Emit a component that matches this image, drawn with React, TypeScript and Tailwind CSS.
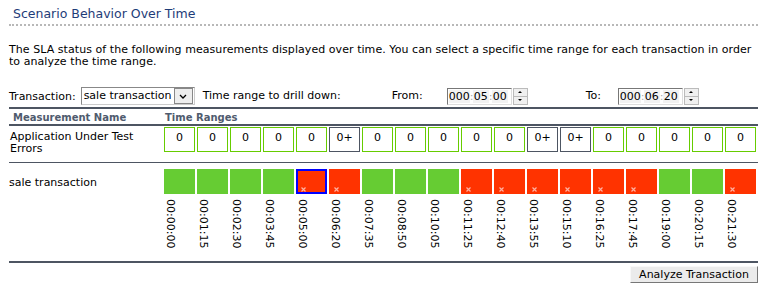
import React from "react";

const errs = [0, 0, 0, 0, 0, 1, 0, 0, 0, 0, 0, 1, 1, 0, 0, 0, 0, 0];
const red = new Set([4, 5, 9, 10, 11, 12, 13, 14, 17]);
const labels = [
  "00:00:00", "00:01:15", "00:02:30", "00:03:45", "00:05:00", "00:06:20",
  "00:07:35", "00:08:50", "00:10:05", "00:11:25", "00:12:40", "00:13:55",
  "00:15:10", "00:16:25", "00:17:45", "00:19:00", "00:20:15", "00:21:30",
];

function Spinner({ a, b, c }: { a: string; b: string; c: string }) {
  return (
    <div className="flex items-stretch h-[17px]">
      <div className="flex items-center bg-white border border-t-[#777] border-l-[#777] border-r-[#ddd] border-b-[#ddd] pl-[1px] pr-[3px] leading-[13px]">
        <span className="bg-[#f2f2f2]">{a}</span>
        <span className="text-[#aaa] w-[3px] text-center">:</span>
        <span className="bg-[#f2f2f2] px-[1px]">{b}</span>
        <span className="text-[#aaa] w-[3px] text-center">:</span>
        <span className="bg-[#f2f2f2] px-[1px]">{c}</span>
      </div>
      <div className="flex flex-col w-[15px] ml-[1px]">
        <div className="flex-1 bg-[#f0f0f0] border border-[#bbb] flex items-center justify-center">
          <div className="w-0 h-0 border-x-[2px] border-x-transparent border-b-[2px] border-b-black" />
        </div>
        <div className="flex-1 bg-[#f0f0f0] border border-t-0 border-[#bbb] flex items-center justify-center">
          <div className="w-0 h-0 border-x-[2px] border-x-transparent border-t-[2px] border-t-black" />
        </div>
      </div>
    </div>
  );
}

export default function App() {
  return (
    <div className="w-[764px] h-[299px] bg-white text-black text-[11px] font-['DejaVu_Sans',Verdana,sans-serif] px-[9px] overflow-hidden">
      <div className="w-[749px]">
        <div className="pt-[6px] pl-[4px] text-[12.5px] leading-[16px] text-[#1e3c78]">
          Scenario Behavior Over Time
        </div>
        <div className="mt-[2px] border-b-2 border-dotted border-[#b8b8b8]" />
        <p className="mt-[18px] leading-[12px] tracking-[0.06px]">
          The SLA status of the following measurements displayed over time. You can select a specific time range for each transaction in order to analyze the time range.
        </p>
        <div className="mt-[18px] flex items-center h-[20px]">
          <span className="mt-[2px]">Transaction:</span>
          <div className="ml-[5px] flex items-center h-[18px] w-[114px] border border-t-[#888] border-l-[#888] border-r-[#ccc] border-b-[#ccc] bg-white">
            <span className="flex-1 pl-[2px] leading-[14px]">sale transaction</span>
            <div className="w-[19px] h-[16px] mr-[1px] bg-[#eee] border border-[#888] flex items-center justify-center">
              <svg width="8" height="5" viewBox="0 0 8 5">
                <path d="M1 1 L4 4 L7 1" stroke="#000" strokeWidth="1.3" fill="none" />
              </svg>
            </div>
          </div>
          <span className="ml-[8px] w-[189px]">Time range to drill down:</span>
          <span className="w-[55px]">From:</span>
          <Spinner a="000" b="05" c="00" />
          <span className="ml-[58px] w-[32px]">To:</span>
          <Spinner a="000" b="06" c="20" />
        </div>
        <div className="mt-[1px] h-[2px] bg-[#4d5562]" />
        <div className="flex items-center h-[14px] font-bold text-[10px] text-[#4f5b6e] mt-[1px]">
          <span className="w-[155px] pl-[4px]">Measurement Name</span>
          <span className="ml-[1px]">Time Ranges</span>
        </div>
        <div className="h-[2px] bg-[#4d5562]" />
        <div className="flex pt-[1px] pb-[7px]">
          <div className="w-[155px] pl-[1px] leading-[12px] pt-[4px]">
            Application Under Test
            <br />
            Errors
          </div>
          <div className="flex gap-[2px]">
            {errs.map((e, i) => (
              <div
                key={i}
                className={`w-[31px] h-[25px] border bg-white text-center leading-[12px] pt-[4px] ${e ? "border-[#4d5562]" : "border-[#66cc00]"}`}
              >
                {e ? "0+" : "0"}
              </div>
            ))}
          </div>
        </div>
        <div className="h-[1px] bg-[#4d5562]" />
        <div className="flex pt-[6px]">
          <div className="w-[155px] pt-[6px]">sale transaction</div>
          <div className="flex gap-[2px]">
            {labels.map((l, i) => (
              <div key={i} className="w-[31px] flex flex-col">
                <div
                  className={`relative h-[25px] ${red.has(i) ? "bg-[#ff3300]" : "bg-[#66cc33]"} ${i === 4 ? "border-2 border-[#0000ff]" : ""}`}
                >
                  {red.has(i) && (
                    <svg
                      width="5"
                      height="5"
                      viewBox="0 0 5 5"
                      className={`absolute ${i === 4 ? "left-[3px] bottom-[0px]" : "left-[5px] bottom-[2px]"}`}
                    >
                      <path d="M0.5 0.5 L4.5 4.5 M4.5 0.5 L0.5 4.5" stroke="#ffb0a0" strokeWidth="1.2" />
                    </svg>
                  )}
                </div>
                <div className="mt-[5px] self-start h-[62px] leading-[13px] [writing-mode:vertical-rl]">
                  {l}
                </div>
              </div>
            ))}
          </div>
        </div>
        <div className="h-[2px] bg-[#4d5562]" />
        <div className="flex justify-end mt-[3px]">
          <button className="h-[17px] w-[128px] bg-[#ebebeb] border border-t-[#f8f8f8] border-l-[#f8f8f8] border-r-[#777] border-b-[#777] text-[11px] leading-[14px] text-black">
            Analyze Transaction
          </button>
        </div>
      </div>
    </div>
  );
}
